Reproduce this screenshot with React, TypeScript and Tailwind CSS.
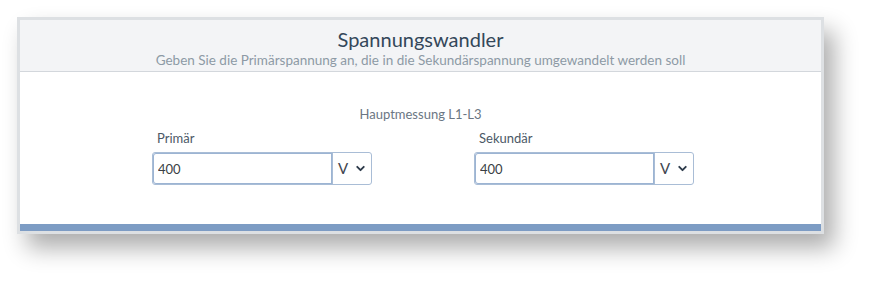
import { ChevronDown } from "lucide-react";

type FieldProps = {
  label: string;
  value: string;
};

function VoltageField({ label, value }: FieldProps) {
  return (
    <div className="flex w-[220px] flex-col">
      <label className="mb-[5px] pl-[5px] text-[13px] leading-[18px] text-[#4b5866]">{label}</label>
      <div className="flex h-[33px] rounded-[3px] border border-[#a9bdd6]">
        <input
          readOnly
          value={value}
          className="h-full w-[180px] rounded-l-[3px] border-r border-[#a9bdd6] px-[5px] text-[13px] text-[#3a3f45] shadow-[inset_0_0_0_1px_#9cb4d3] outline-none"
        />
        <div className="flex flex-1 items-center justify-between pl-[5px] pr-[4px] text-[15px] text-[#3f4650]">
          <span>V</span>
          <ChevronDown size={13} strokeWidth={3.5} className="text-[#2d3a4a]" />
        </div>
      </div>
    </div>
  );
}

export default function App() {
  return (
    <div
      className="h-[283px] w-[872px] bg-white pl-[17px] pt-[17px]"
      style={{ fontFamily: '"Lato", "Open Sans", sans-serif' }}
    >
      <div className="w-[807px] border-[3px] border-[#dde0e3] shadow-[10px_14px_22px_rgba(0,0,0,0.32)]">
        <div className="flex h-[52px] flex-col items-center border-b border-[#d3d7dc] bg-[#f3f4f6] pt-[6px]">
          <h1 className="text-[20px] leading-[26px] text-[#34475a]">Spannungswandler</h1>
          <p className="text-[13.5px] leading-[17px] text-[#8d9aa5]">
            Geben Sie die Primärspannung an, die in die Sekundärspannung umgewandelt werden soll
          </p>
        </div>
        <div className="h-[152px] bg-white pt-[33px]">
          <p className="text-center text-[13px] leading-[18px] text-[#6b7683]">Hauptmessung L1-L3</p>
          <div className="mt-[6px] flex gap-[102px] pl-[132px]">
            <VoltageField label="Primär" value="400" />
            <VoltageField label="Sekundär" value="400" />
          </div>
        </div>
        <div className="h-[7px] bg-[#7d9cc4]" />
      </div>
    </div>
  );
}
